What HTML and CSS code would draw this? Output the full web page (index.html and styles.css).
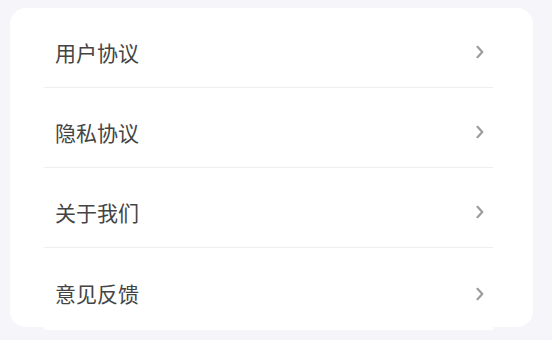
FILE: index.html
```html
<!DOCTYPE html>
<html lang="zh-CN">
<head>
<meta charset="utf-8">
<link rel="stylesheet" href="styles.css">
</head>
<body>
<div class="card">
  <div class="row"><span class="label">用户协议</span><svg class="chev" viewBox="0 0 8 14" width="8" height="14"><path d="M1.5 1.8 L6.3 7 L1.5 12.2" fill="none" stroke="#9c9c9c" stroke-width="2.2" stroke-linecap="round" stroke-linejoin="round"/></svg></div>
  <div class="row"><span class="label">隐私协议</span><svg class="chev" viewBox="0 0 8 14" width="8" height="14"><path d="M1.5 1.8 L6.3 7 L1.5 12.2" fill="none" stroke="#9c9c9c" stroke-width="2.2" stroke-linecap="round" stroke-linejoin="round"/></svg></div>
  <div class="row"><span class="label">关于我们</span><svg class="chev" viewBox="0 0 8 14" width="8" height="14"><path d="M1.5 1.8 L6.3 7 L1.5 12.2" fill="none" stroke="#9c9c9c" stroke-width="2.2" stroke-linecap="round" stroke-linejoin="round"/></svg></div>
  <div class="row last"><span class="label">意见反馈</span><svg class="chev" viewBox="0 0 8 14" width="8" height="14"><path d="M1.5 1.8 L6.3 7 L1.5 12.2" fill="none" stroke="#9c9c9c" stroke-width="2.2" stroke-linecap="round" stroke-linejoin="round"/></svg></div>
</div>
</body>
</html>
```
FILE: styles.css
```css
html, body {
  margin: 0;
  padding: 0;
  background: #f6f6fa;
}
body {
  font-family: "Noto Sans CJK SC", "Noto Sans", sans-serif;
  height: 340px;
  overflow: hidden;
}
.card {
  margin: 8px 19px 0 10px;
  height: 319px;
  background: #ffffff;
  border-radius: 16px;
  display: flex;
  flex-direction: column;
  padding: 0 40px 0 34px;
}
.row {
  flex: none;
  border-bottom: 1px solid #eeeeee;
  display: flex;
  align-items: center;
  justify-content: space-between;
  padding: 9px 9px 0 11px;
  box-sizing: border-box;
  height: 80px;
  background: #ffffff;
}
.row.last {
  border-bottom: none;
  height: 82px;
}
.label {
  font-size: 21px;
  color: #444444;
  line-height: 1;
}
.chev {
  display: block;
}
```
